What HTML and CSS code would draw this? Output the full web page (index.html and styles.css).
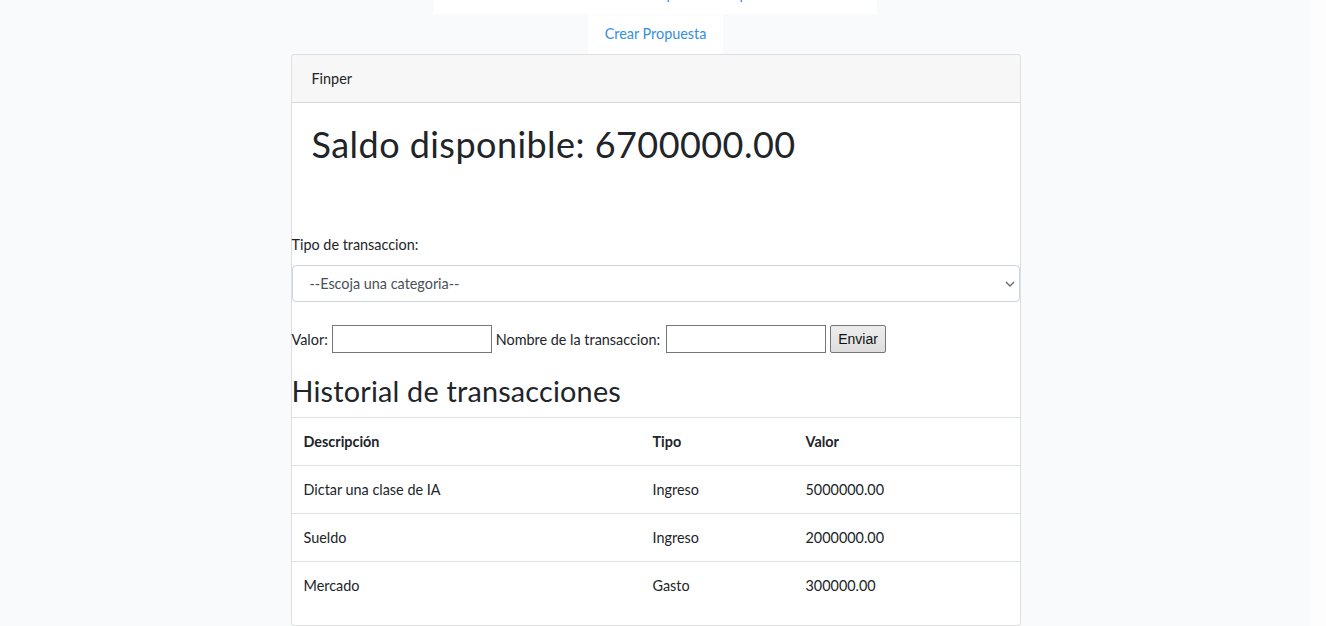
FILE: index.html
```html
<!DOCTYPE html>
<html lang="es">
<head>
<meta charset="utf-8">
<title>Finper</title>
<link rel="stylesheet" href="styles.css">
</head>
<body>
<div class="page">
  <div class="top-nav">
    <div class="top-bar"><span>Propuestas</span><span>Mi perfil</span></div>
    <a class="tab" href="#">Crear Propuesta</a>
  </div>
  <div class="card">
    <div class="card-header">Finper</div>
    <div class="card-body">
      <h1 class="saldo">Saldo disponible: 6700000.00</h1>
    </div>
    <form class="tx-form">
      <div class="form-group">
        <label class="label">Tipo de transaccion:</label>
        <div class="select-wrap">
          <select class="form-control">
            <option>--Escoja una categoria--</option>
          </select>
          <svg class="chev" width="10" height="6" viewBox="0 0 10 6"><path d="M1 1l4 4 4-4" fill="none" stroke="#6b6b6b" stroke-width="1.4"/></svg>
        </div>
      </div>
      <div class="inline-row">
        <span>Valor:</span>
        <input class="txt" type="text">
        <span>Nombre de la transaccion:</span>
        <input class="txt txt-2" type="text">
        <button class="btn" type="button">Enviar</button>
      </div>
    </form>
    <h2 class="hist">Historial de transacciones</h2>
    <table class="table">
      <thead>
        <tr><th class="c1">Descripción</th><th class="c2">Tipo</th><th>Valor</th></tr>
      </thead>
      <tbody>
        <tr><td>Dictar una clase de IA</td><td>Ingreso</td><td>5000000.00</td></tr>
        <tr><td>Sueldo</td><td>Ingreso</td><td>2000000.00</td></tr>
        <tr><td>Mercado</td><td>Gasto</td><td>300000.00</td></tr>
      </tbody>
    </table>
  </div>
</div>
</body>
</html>
```

FILE: styles.css
```css
html { background: #fdfdfd; }
body {
  margin: 0;
  font-family: "Lato", "Noto Sans", sans-serif;
  font-size: 14.4px;
  line-height: 1.6;
  color: #212529;
}
.page {
  width: 1311px;
  min-height: 626px;
  background: #f8fafc;
  overflow: hidden;
}
.top-nav {
  display: flex;
  flex-direction: column;
  align-items: center;
}
.top-bar {
  width: 443px;
  height: 14px;
  box-sizing: border-box;
  padding-left: 211px;
  background: #fff;
  overflow: hidden;
  display: flex;
  align-items: flex-start;
  gap: 4px;
  color: #3490dc;
  line-height: 1;
}
.top-bar span { margin-top: -13px; }
.tab {
  margin-top: 1px;
  background: #fff;
  color: #3490dc;
  text-decoration: none;
  padding: 7px 17px;
  height: 39px;
  box-sizing: border-box;
}
.card {
  width: 730px;
  box-sizing: border-box;
  margin: 0 auto;
  background: #fff;
  border: 1px solid rgba(0,0,0,.125);
  border-radius: 4px;
}
.card-header {
  background: #f7f7f7;
  padding: 12px 20px;
  border-bottom: 1px solid rgba(0,0,0,.125);
  border-radius: 3px 3px 0 0;
}
.card-body { padding: 20px; }
.saldo {
  margin: 0 0 8px;
  font-size: 36px;
  font-weight: 400;
  line-height: 1.2;
  letter-spacing: 0.45px;
}
.tx-form { margin-top: 39px; }
.form-group { margin-bottom: 23px; }
.label { display: inline-block; margin-bottom: 9px; }
.select-wrap { position: relative; }
.form-control {
  display: block;
  width: 100%;
  height: 37px;
  box-sizing: border-box;
  padding: 6px 17px;
  font: inherit;
  color: #495057;
  background: #fff;
  border: 1px solid #ced4da;
  border-radius: 4px;
  -webkit-appearance: none;
  appearance: none;
}
.chev { position: absolute; right: 5px; top: 16px; }
.inline-row {
  display: flex;
  align-items: center;
  gap: 4px;
  height: 28px;
}
.txt {
  width: 160px;
  height: 28px;
  box-sizing: border-box;
  border: 1px solid #767676;
  padding: 1px 2px;
  font: inherit;
  margin: 0;
}
.txt-2 { margin-left: 2px; }
.btn {
  width: 56px;
  height: 28px;
  box-sizing: border-box;
  border: 1px solid #767676;
  border-radius: 2px;
  background: linear-gradient(#ededed, #dedede);
  font-family: "Liberation Sans", Arial, sans-serif;
  font-size: 14px;
  color: #111;
  padding: 0;
}
.hist {
  margin: 21px 0 8px;
  font-size: 28.8px;
  font-weight: 400;
  line-height: 1.2;
  letter-spacing: 0.2px;
}
.table {
  width: 100%;
  border-collapse: collapse;
  margin-bottom: 16px;
}
.table th, .table td {
  padding: 12px;
  text-align: left;
  border-top: 1px solid #dee2e6;
  vertical-align: top;
}
.table th { font-weight: 700; }
.c1 { width: 325px; }
.c2 { width: 129px; }
```
